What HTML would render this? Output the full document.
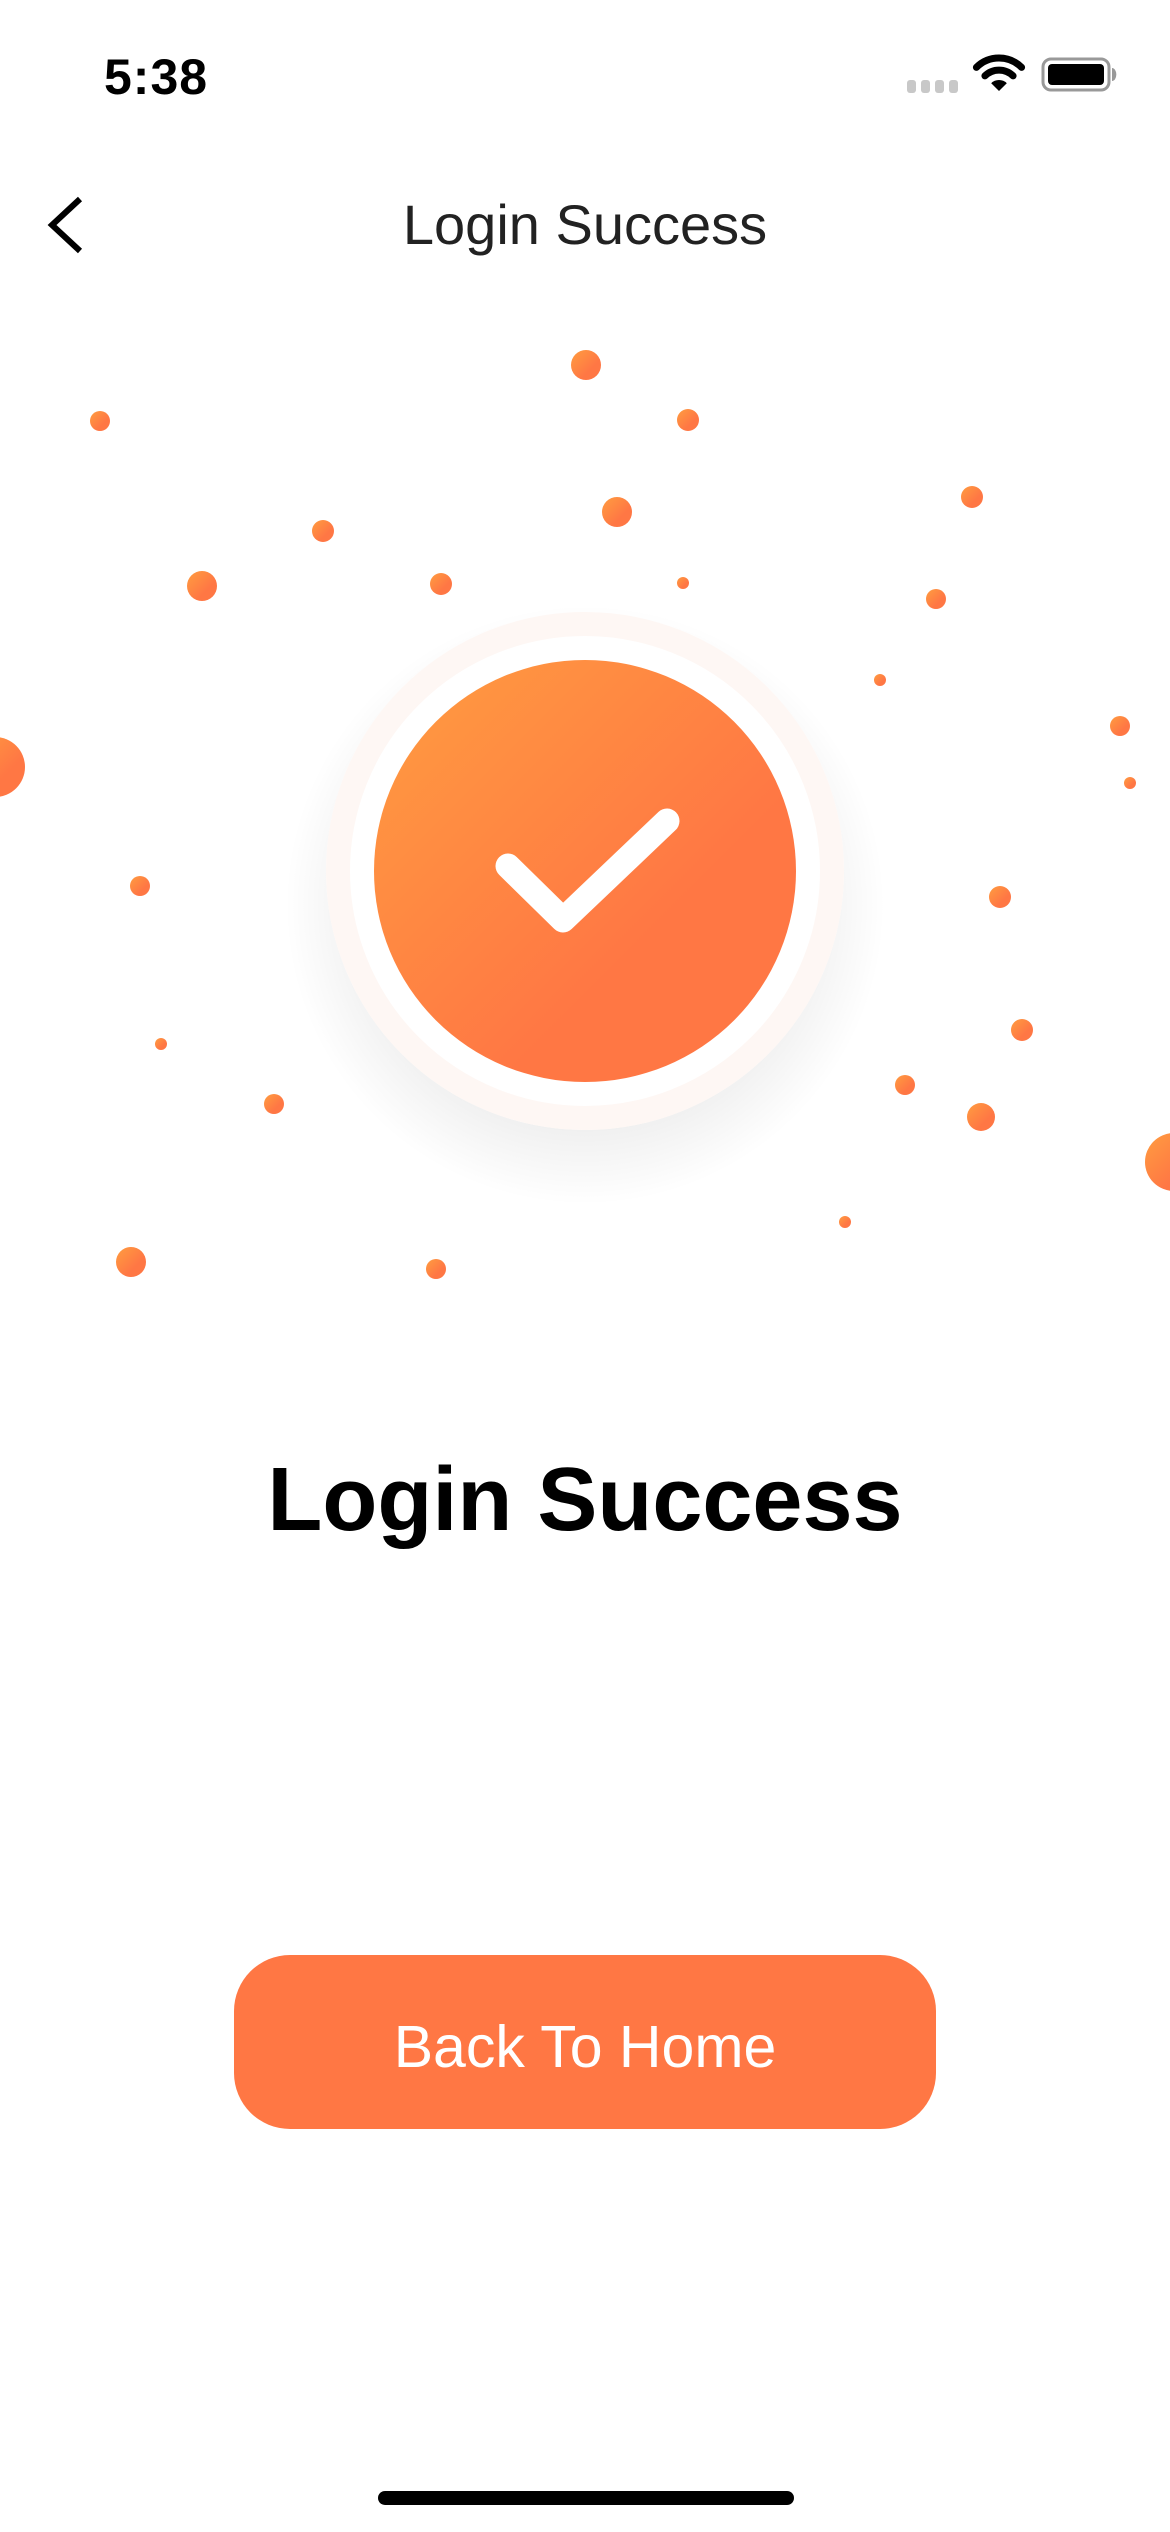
<!DOCTYPE html>
<html><head><meta charset="utf-8"><style>
html,body{margin:0;padding:0;background:#fff;}
body{width:1170px;height:2532px;position:relative;overflow:hidden;font-family:"Liberation Sans",sans-serif;}
.abs{position:absolute;}
</style></head><body>
<div class="abs" style="left:104px;top:48px;font-size:50px;font-weight:bold;color:#000;letter-spacing:1px;">5:38</div>
<svg class="abs" style="left:0;top:0" width="1170" height="280">
  <g fill="#c8c8c8"><rect x="907" y="80" width="9" height="13" rx="3"/><rect x="921" y="80" width="9" height="13" rx="3"/><rect x="935" y="80" width="9" height="13" rx="3"/><rect x="949" y="80" width="9" height="13" rx="3"/></g>
  <path d="M976.4 67.4 A32 32 0 0 1 1021.6 67.4" stroke="#000" stroke-width="7" fill="none" stroke-linecap="round"/>
  <path d="M984.9 75.9 A20 20 0 0 1 1013.1 75.9" stroke="#000" stroke-width="7" fill="none" stroke-linecap="round"/>
  <path d="M999 91 L991.2 83.2 A11 11 0 0 1 1006.8 83.2 Z" fill="#000"/>
  <rect x="1043" y="59" width="66" height="31" rx="8" fill="none" stroke="#999" stroke-width="3"/>
  <rect x="1048" y="64" width="56" height="21" rx="4" fill="#000"/>
  <path d="M1112 68 v13 a4 6 0 0 0 0 -13z" fill="#999"/>
  <path d="M80 199 L52 225 L80 251" stroke="#000" stroke-width="6" fill="none"/>
</svg>
<div class="abs" style="left:0;width:1170px;top:192px;text-align:center;font-size:56px;color:#222;">Login Success</div>
<svg class="abs" style="left:0;top:0" width="1170" height="1400">
  <defs>
    <linearGradient id="g" x1="0" y1="0" x2="1" y2="1"><stop offset="0" stop-color="#ff9d40"/><stop offset="0.65" stop-color="#ff7744"/><stop offset="1" stop-color="#ff7744"/></linearGradient>
    <radialGradient id="sh" cx="0.5" cy="0.5" r="0.5"><stop offset="0.7" stop-color="#000" stop-opacity="0.07"/><stop offset="1" stop-color="#000" stop-opacity="0"/></radialGradient>
  </defs>
  <g fill="url(#g)">
    <circle cx="586" cy="365" r="15"/><circle cx="100" cy="421" r="10"/><circle cx="688" cy="420" r="11"/><circle cx="617" cy="512" r="15"/><circle cx="323" cy="531" r="11"/><circle cx="972" cy="497" r="11"/><circle cx="202" cy="586" r="15"/><circle cx="441" cy="584" r="11"/><circle cx="683" cy="583" r="6"/><circle cx="936" cy="599" r="10"/><circle cx="880" cy="680" r="6"/><circle cx="-5" cy="767" r="30"/><circle cx="1120" cy="726" r="10"/><circle cx="1130" cy="783" r="6"/><circle cx="140" cy="886" r="10"/><circle cx="1000" cy="897" r="11"/><circle cx="161" cy="1044" r="6"/><circle cx="1022" cy="1030" r="11"/><circle cx="274" cy="1104" r="10"/><circle cx="905" cy="1085" r="10"/><circle cx="981" cy="1117" r="14"/><circle cx="1174" cy="1162" r="29"/><circle cx="845" cy="1222" r="6"/><circle cx="131" cy="1262" r="15"/><circle cx="436" cy="1269" r="10"/>
  </g>
  <circle cx="585" cy="905" r="300" fill="url(#sh)"/>
  <circle cx="585" cy="871" r="259" fill="#fff"/>
  <circle cx="585" cy="871" r="247" fill="none" stroke="#fef7f4" stroke-width="24"/>
  <circle cx="585" cy="871" r="211" fill="url(#g)"/>
  <path d="M508 866 L563 920 L667 821" stroke="#fff" stroke-width="25" stroke-linecap="round" stroke-linejoin="round" fill="none"/>
</svg>
<div class="abs" style="left:0;width:1170px;top:1443px;text-align:center;font-size:90px;font-weight:bold;color:#000;line-height:115px;">Login Success</div>
<div class="abs" style="left:234px;top:1955px;width:702px;height:174px;border-radius:56px;background:#ff7744;color:#fff;font-size:59px;text-align:center;line-height:184px;">Back To Home</div>
<div class="abs" style="left:378px;top:2491px;width:416px;height:14px;border-radius:7px;background:#000;"></div>
</body></html>
